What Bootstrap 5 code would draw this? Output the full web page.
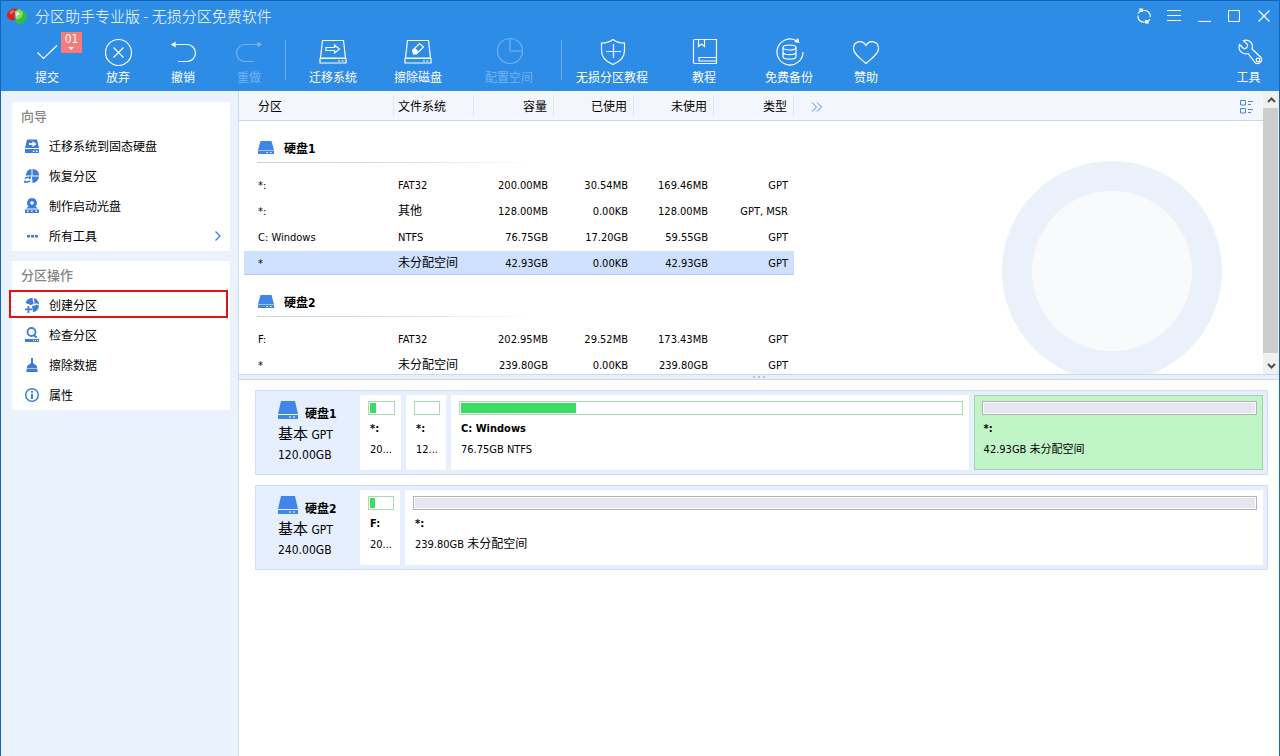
<!DOCTYPE html>
<html lang="zh-CN">
<head>
<meta charset="utf-8">
<meta name="viewport" content="width=device-width, initial-scale=1">
<title>分区助手专业版 - 无损分区免费软件</title>
<link href="https://cdn.jsdelivr.net/npm/bootstrap@5.3.0/dist/css/bootstrap.min.css" rel="stylesheet">
<style>
:root { --brand: #2d8ce6; --ink-blue: #3c7ddb; --ui: "DejaVu Sans Condensed", "Noto Sans CJK SC", sans-serif; }
body { font-family: var(--ui); font-size: 12px; line-height: 16px; color: #000; background: #fff; }
button { font-family: inherit; border: 0; background: none; padding: 0; color: inherit; }
svg { display: block; flex: none; }
.app-window { border: 1px solid #1467b8; border-bottom: 0; min-height: 100vh; }
.app-header { background: var(--brand); color: #fff; }
.title-row { height: 30px; padding-left: 6px; }
.app-title { font-family: "Noto Sans CJK SC", sans-serif; font-size: 15px; font-weight: 300; line-height: 20px; }
.win-btn { width: 30px; height: 30px; }
.tool-grid { display: grid; height: 60px; padding-left: 10px; grid-template-columns: 72px 70px 60px 72px 2px 92px 78px 104px 2px 98px 86px 84px 70px 1fr 61px; }
.tool-btn { display: flex; flex-direction: column; align-items: center; padding-top: 5px; gap: 2px; position: relative; white-space: nowrap; line-height: 20px; }
.tool-btn:disabled { color: #74b3f0; }
.tool-btn svg, .win-btn svg { fill: none; stroke: currentColor; stroke-width: 1.2; }
.tool-sep { width: 1px; height: 40px; margin-top: 9px; background: #6db1f2; }
.count-tag { position: absolute; left: 50px; top: 1px; width: 21px; height: 21px; background: #f77b7b; line-height: 15px; }
.count-tag::after { content: ""; position: absolute; left: 7px; top: 15px; border: 3px solid transparent; border-top-color: #fff; border-bottom: 0; }
.side-pane { width: 238px; flex: none; background: #eaf2fe; border-right: 1px solid #cddcf2; padding: 11px 8px 11px 11px; gap: 10px; }
.side-box { background: #fff; }
.side-box h2 { font-size: 13px; line-height: 30px; height: 29px; font-weight: 500; color: #858585; margin: 0; padding-left: 9px; }
.side-item { display: flex; align-items: center; width: 100%; height: 30px; padding: 0 8px 0 12px; gap: 9px; text-align: left; line-height: 16px; position: relative; }
.side-item span { padding-top: 2px; }
.side-item.picked::after { content: ""; position: absolute; left: -3px; right: 2px; top: 0; height: 28px; border: 2px solid #e01414; }
.side-item svg { fill: var(--ink-blue); }
.list-pane { flex: 0 0 283px; position: relative; overflow: hidden; }
.usage-ring { position: absolute; right: 57px; top: 70px; width: 220px; height: 220px; border-radius: 50%; border: 30px solid #eaf1fa; background: #f9fafb; }
.part-table { position: relative; table-layout: fixed; border-collapse: separate; border-spacing: 0; color: #000; --bs-table-bg: transparent; --bs-table-color: #000; }
.part-table thead th { height: 30px; padding: 2px 7px 0 4px; font-weight: 400; vertical-align: middle; background: #f3f6fc linear-gradient(#e2e8f2, #e2e8f2) right 50% / 1px 22px no-repeat; border-bottom: 1px solid #cdd7e4; text-align: right; }
.part-table thead th:nth-child(1), .part-table thead th:nth-child(2) { text-align: left; }
.part-table thead th:nth-child(1) { padding-left: 19px; }
.part-table thead th:last-child { background: #f3f6fc; padding-left: 17px; padding-right: 5px; }
.part-table tbody th { height: 50px; padding: 0; vertical-align: top; border: 0; }
.part-table tbody:nth-of-type(1) th { height: 52px; padding-top: 2px; }
.part-table tbody td { height: 26px; padding: 2px 6px 0 4px; font-size: 11px; line-height: 22px; vertical-align: middle; text-align: right; border-bottom: 2px solid transparent; white-space: nowrap; background-clip: padding-box; }
.part-table tbody td:nth-child(1) { padding-left: 14px; text-align: left; border-left: 5px solid transparent; }
.part-table tbody td:nth-child(2) { text-align: left; }
.part-table tr.chosen td:not(:last-child) { background-color: #cde0fd; box-shadow: inset 0 -1px #b4cae4; }
.cjk { font-size: 12px; line-height: 16px; }
.group-head { height: 39px; padding: 15px 0 0 19px; gap: 10px; font-size: 12px; line-height: 22px; }
.group-head svg { margin-top: 3px; }
.group-rule { height: 1px; width: 280px; margin-left: 18px; background: linear-gradient(90deg, #c6d0da, #d8dee6 50%, #fff); }
.bar-col { width: 16px; flex: none; background: #f0f0f0; position: relative; }
.bar-thumb { background: #cdcdcd; width: 15px; }
.bar-btn { height: 17px; }
.split-bar { height: 6px; flex: none; background: #e9f0f7; border-top: 1px solid #c9d9ea; border-bottom: 1px solid #c9d9ea; gap: 3px; }
.split-bar i { width: 2px; height: 2px; background: #b4c4e0; }
.map-pane { padding: 10px 11px 10px 16px; gap: 10px; }
.disk-row { height: 85px; background: #e6effd; border: 1px solid #d0def3; padding: 4px; gap: 5px; }
.disk-info { width: 95px; flex: none; padding: 6px 0 0 18px; line-height: 18px; }
.disk-name { font-weight: 700; font-size: 12px; gap: 7px; line-height: 18px; }
.disk-name span { padding-top: 4px; }
.disk-kind { line-height: 22px; font-size: 12px; white-space: nowrap; }
.disk-kind span { font-size: 15px; }
.part-box { background: #fff; padding: 6px; padding-left: 8px; min-width: 0; text-align: left; font-size: 11px; flex-basis: 0; display: flex; flex-direction: column; }
.part-box.slim { flex: 0 0 41px; }
.part-box.slim + .part-box.slim, .disk-row .part-box.narrow { flex-basis: 40px; }
.part-box.free { background: #c1f5c8; outline: 1px solid #a1d2a8; outline-offset: -1px; }
.part-box p { margin: 0 0 0 2px; line-height: 20px; white-space: nowrap; }
.part-box .part-name { font-weight: 700; margin-top: 4px; margin-bottom: 1px; }
.use-bar { width: 100%; height: 14px; flex: none; border: 1px solid #a9dbb0; padding: 1px; background: #fff; }
.use-bar div { height: 10px; background: #3bdd60; }
.use-bar.blank { border-color: #b3b3bd; }
.use-bar.blank div { background: #e6e6f0; }
</style>
</head>
<body>
<svg width="0" height="0" class="position-absolute" aria-hidden="true">
  <symbol id="drive" viewBox="0 0 16 13"><path d="M2.500 0h11L16 9H0zM0 9.600h16V13H0z"/><path stroke="#fff" d="M8.500 11.500H10M12 11.500h1.500"/></symbol>
  <symbol id="drive-line" viewBox="0 0 28 28"><path d="M3.500 3.500h21l2 17.500h-25zM1 21.500h26v4.500H1zM19 24h2M22.500 24h2"/></symbol>
</svg>
<div class="app-window d-flex flex-column">
  <header class="app-header">
    <div class="title-row d-flex align-items-center">
      <svg width="20" height="18" viewBox="0 0 20 18"><path fill="#d9211c" d="M0 8C1 3 5 1 10 2l2 3-5 3 1 5C4 14 0 12 0 8z"/><path fill="#2bbf4a" d="M20 9c0 5-4 8-9 8l-3-2 1-3 6-2-1-6c4 0 6 2 6 5z"/><path fill="#8fdc4c" d="M7 5l5-3 4 3-1 5-5 3-2-3 4-2z"/><path fill="#fff" fill-opacity=".75" d="M8 6l3-1 2 2-4 3z"/><path fill="#f5634e" d="M2 5l4-2 2 1-4 4z"/></svg>
      <h1 class="app-title m-0 ps-2 flex-grow-1">分区助手专业版 - 无损分区免费软件</h1>
      <button class="win-btn d-flex align-items-center justify-content-center" aria-label="刷新"><svg width="16" height="16"><path d="M5 2.500h3.500a5.500 5.500 0 0 1 5.700 6.500M11 14H8a5.500 5.500 0 0 1-6-6.500M2 5.500L4 3M14 11l-2 2.500"/><path fill="currentColor" stroke="none" d="M3 .5h4v3.500H4zM13 15.500H9V12h3z"/></svg></button>
      <button class="win-btn d-flex align-items-center justify-content-center" aria-label="菜单"><svg width="14" height="12"><path d="M0 .5h14M0 5.500h14M0 10.500h14"/></svg></button>
      <button class="win-btn d-flex align-items-center justify-content-center" aria-label="最小化"><svg width="13" height="12"><path d="M0 11.500h13"/></svg></button>
      <button class="win-btn d-flex align-items-center justify-content-center" aria-label="最大化"><svg width="12" height="12"><path d="M.5.5h11v11H.5z"/></svg></button>
      <button class="win-btn d-flex align-items-center justify-content-center" aria-label="关闭"><svg width="12" height="12"><path d="M.5.5l11 11M11.500.5l-11 11"/></svg></button>
    </div>
    <nav class="tool-grid" aria-label="工具栏">
      <button class="tool-btn"><svg width="30" height="30"><path d="M5.500 16.500l6 6L25 9.500"/></svg>提交<span class="count-tag">01</span></button>
      <button class="tool-btn"><svg width="30" height="30"><circle cx="15.500" cy="16.500" r="13"/><path d="M10.500 11.500l10 10M20.500 11.500l-10 10"/></svg>放弃</button>
      <button class="tool-btn"><svg width="30" height="30"><path d="M5 8.500h14a8.500 8.500 0 0 1 0 17H10"/><path fill="currentColor" d="M4 8.500l3-2v4z"/></svg>撤销</button>
      <button class="tool-btn" disabled><svg width="30" height="30"><path d="M25 8.500H11a8.500 8.500 0 0 0 0 17h9"/><path fill="currentColor" d="M27 8.500l-3-2v4z"/></svg>重做</button>
      <span class="tool-sep"></span>
      <button class="tool-btn"><svg width="30" height="30" viewBox="0 0 30 30"><use href="#drive-line" x="1" y="1" width="28" height="28"/><path d="M8 11.500h8.500V9l5 4-5 4v-2.500H8z"/></svg>迁移系统</button>
      <button class="tool-btn"><svg width="30" height="30" viewBox="0 0 30 30"><use href="#drive-line" x="1" y="1" width="28" height="28"/><path d="M9.500 14.500l7-7 4 3.500-7 7h-3z"/><path fill="currentColor" stroke="none" d="M10 14.500l2.500-2 3 3-2.500 2.500h-2.500z"/></svg>擦除磁盘</button>
      <button class="tool-btn" disabled><svg width="30" height="30"><circle cx="16" cy="15" r="12.500"/><path d="M16 2.500V15h12.500"/></svg>配置空间</button>
      <span class="tool-sep"></span>
      <button class="tool-btn"><svg width="30" height="30"><path d="M16 3.500c3 2.500 7 3.500 11.500 3.500v7.500c0 7-5 11.500-11.500 14-6.500-2.500-11.500-7-11.500-14V7c4.500 0 8.500-1 11.500-3.500zM9 15.500h15M16.500 8v14"/></svg>无损分区教程</button>
      <button class="tool-btn"><svg width="30" height="30"><path d="M6 3.500h21.500v24H6a1.500 1.500 0 0 1-1.500-1.500V5c0-1 .5-1.500 1.500-1.500zM9.500 4v6.500l3-2.500 3 2.500V4M27 21.500H10v3.500h17"/></svg>教程</button>
      <button class="tool-btn"><svg width="30" height="30"><path d="M22 4.500A13 13 0 1 0 29 16"/><path fill="currentColor" stroke="none" d="M20 6l4-4 1.500 5z"/><ellipse cx="15.500" cy="11.500" rx="6.500" ry="2.500"/><path d="M9 11.500v9c0 3.500 13 3.500 13 0v-9M9 16c0 3.500 13 3.500 13 0"/></svg>免费备份</button>
      <button class="tool-btn"><svg width="30" height="30"><path d="M15 27.500C9 22 2.500 18 2.500 12.500 2.500 5.500 11 3 15 9.500c4-6.500 12.500-4 12.500 3C27.500 18 21 22 15 27.500z"/></svg>赞助</button>
      <span></span>
      <button class="tool-btn"><svg width="30" height="30"><path d="M5.500 8.500l4 4c2 1 5-1.500 4-4l-4-4C15 3 20 7 18 13l9 8.500a4 4 0 0 1-5.500 5.500l-7.500-9.500C8 19 3.500 14 5.500 8.500z"/><circle cx="24" cy="24" r="1.800"/></svg>工具</button>
    </nav>
  </header>

  <div class="d-flex flex-grow-1">
    <aside class="side-pane d-flex flex-column">
      <section class="side-box">
        <h2>向导</h2>
        <button class="side-item"><svg width="16" height="16"><path d="M3 1.500h10l2 8.500H1zM1 11h14v4H1z"/><path fill="#fff" d="M5 5h3.500V3l4 3-4 3V7H5zM9 12.500h1.500V14H9zM12 12.500h1.500V14H12z"/></svg><span>迁移系统到固态硬盘</span></button>
        <button class="side-item"><svg width="16" height="16"><path d="M7.500 1v6.500H2A6 6 0 0 1 7.500 1zM8.500 1a6 6 0 0 1 6.500 6.500H8.500zM15 8.500A6.500 6.500 0 0 1 8.500 15L8 8.500z"/><path fill="none" stroke="#3c7ddb" stroke-width="1.500" d="M1 10.500a3 3 0 0 1 5 0M6 12.500a3 3 0 0 1-5 .5M6 8v3M1 15v-2.500"/></svg><span>恢复分区</span></button>
        <button class="side-item"><svg width="16" height="16"><path fill-rule="evenodd" d="M8 0a5 5 0 0 1 3.500 8.500L14 10.500H2l2.500-2A5 5 0 0 1 8 0zm0 3.200a1.800 1.800 0 1 0 0 3.600 1.800 1.800 0 0 0 0-3.600zM1 11.500h14V15H1z"/><path fill="#fff" d="M3 12.500h1.500V14H3zM7 12.500h1.500V14H7zM11.500 12.500H13V14h-1.500z"/></svg><span>制作启动光盘</span></button>
        <button class="side-item"><svg width="16" height="16"><path d="M3 7h3v2.500H3zM7 7h3v2.500H7zM11 7h3v2.500h-3z"/></svg><span>所有工具</span><svg class="ms-auto" width="8" height="12"><path fill="none" stroke="#3c7ddb" stroke-width="1.300" d="M1.500 1.500L6 6l-4.500 4.500"/></svg></button>
      </section>
      <section class="side-box">
        <h2>分区操作</h2>
        <button class="side-item picked"><svg width="16" height="16"><path d="M1.500 6C2.500 2.500 5 1 8.500 1l1 6L7 8zM10 1c3 1 5 3.500 5 6.500l-3-1.500-1.500 1.500zM8 9l3-.5 2-1 2 1.500c-.5 3.500-3 6-6 6zM3.500 9h1.800v2.500H8v1.800H5.300V16H3.500v-2.700H1v-1.800h2.500z"/></svg><span>创建分区</span></button>
        <button class="side-item"><svg width="16" height="16"><circle cx="7.500" cy="5" r="4" fill="none" stroke="#3c7ddb" stroke-width="1.800"/><path d="M10 7l3.500 3-1.500 1.300-3.500-3zM1 12h14v3H1z"/><path fill="#fff" d="M9 13h1v1H9zM11 13h1v1h-1zM13 13h1v1h-1z"/></svg><span>检查分区</span></button>
        <button class="side-item"><svg width="16" height="16"><path d="M7 1h2v5l4 3v2H3V9l4-3zM3 11.500h10l1 3.500H2z"/></svg><span>擦除数据</span></button>
        <button class="side-item"><svg width="16" height="16"><circle cx="8" cy="8" r="6.300" fill="none" stroke="#3c7ddb" stroke-width="1.500"/><path d="M7 4h2v1.800H7zM7 7h2v5H7z"/></svg><span>属性</span></button>
      </section>
    </aside>

    <main class="flex-grow-1 d-flex flex-column">
      <div class="list-pane d-flex">
        <div class="usage-ring"></div>
        <div class="flex-grow-1">
          <table class="table table-borderless part-table mb-0">
            <colgroup><col style="width:155px"><col style="width:80px"><col style="width:80px"><col style="width:80px"><col style="width:80px"><col style="width:80px"><col></colgroup>
            <thead><tr><th>分区</th><th>文件系统</th><th>容量</th><th>已使用</th><th>未使用</th><th>类型</th><th>
              <div class="d-flex justify-content-between align-items-center">
                <button aria-label="更多列"><svg width="12" height="10"><path fill="none" stroke="#4a8ae0" d="M1 .5L5.500 5 1 9.500M6 .5L10.500 5 6 9.500"/></svg></button>
                <button class="me-1" aria-label="视图"><svg width="14" height="15"><path fill="none" stroke="#4f86d0" d="M.5 1.500h5v4.500h-5zM.5 9.500h5V14h-5zM8 2.500h5M8 5.500h3M8 10.500h5M8 13.500h3"/></svg></button>
              </div></th></tr></thead>
            <tbody>
              <tr><th colspan="7"><div class="group-head d-flex align-items-start"><svg width="16" height="13" fill="#4285e8"><use href="#drive"/></svg><span>硬盘1</span></div><div class="group-rule"></div></th></tr>
              <tr><td>*:</td><td>FAT32</td><td>200.00MB</td><td>30.54MB</td><td>169.46MB</td><td>GPT</td><td></td></tr>
              <tr><td>*:</td><td><span class="cjk">其他</span></td><td>128.00MB</td><td>0.00KB</td><td>128.00MB</td><td>GPT, MSR</td><td></td></tr>
              <tr><td>C: Windows</td><td>NTFS</td><td>76.75GB</td><td>17.20GB</td><td>59.55GB</td><td>GPT</td><td></td></tr>
              <tr class="chosen"><td>*</td><td><span class="cjk">未分配空间</span></td><td>42.93GB</td><td>0.00KB</td><td>42.93GB</td><td>GPT</td><td></td></tr>
            </tbody>
            <tbody>
              <tr><th colspan="7"><div class="group-head d-flex align-items-start"><svg width="16" height="13" fill="#4285e8"><use href="#drive"/></svg><span>硬盘2</span></div><div class="group-rule"></div></th></tr>
              <tr><td>F:</td><td>FAT32</td><td>202.95MB</td><td>29.52MB</td><td>173.43MB</td><td>GPT</td><td></td></tr>
              <tr><td>*</td><td><span class="cjk">未分配空间</span></td><td>239.80GB</td><td>0.00KB</td><td>239.80GB</td><td>GPT</td><td></td></tr>
            </tbody>
          </table>
        </div>
        <div class="bar-col d-flex flex-column">
          <button class="bar-btn d-flex align-items-center justify-content-center" aria-label="向上滚动"><svg width="9" height="6"><path fill="none" stroke="#505050" stroke-width="2" d="M1 5l3.500-3.500L8 5"/></svg></button>
          <div class="bar-thumb flex-grow-1"></div>
          <button class="bar-btn d-flex align-items-center justify-content-center mt-1" aria-label="向下滚动"><svg width="9" height="6"><path fill="none" stroke="#505050" stroke-width="2" d="M1 1l3.500 3.500L8 1"/></svg></button>
        </div>
      </div>
      <div class="split-bar d-flex align-items-center justify-content-center"><i></i><i></i><i></i></div>

      <div class="map-pane d-flex flex-column">
        <section class="disk-row d-flex">
          <div class="disk-info">
            <div class="disk-name d-flex align-items-start"><svg width="20" height="18" viewBox="0 0 20 18" fill="#4285e8"><path d="M3 0h14l3 13H0zM0 14h20v4H0z"/><path fill="#fff" d="M11 15.500h2v1h-2zM15 15.500h2v1h-2z"/></svg><span class="text-nowrap">硬盘1</span></div>
            <div class="disk-kind"><span>基本</span> GPT</div>
            <div>120.00GB</div>
          </div>
          <button class="part-box slim"><div class="use-bar"><div style="width:25%"></div></div><p class="part-name">*:</p><p>20...</p></button>
          <button class="part-box slim"><div class="use-bar"></div><p class="part-name">*:</p><p>12...</p></button>
          <button class="part-box" style="flex-grow:64"><div class="use-bar"><div style="width:23%"></div></div><p class="part-name">C: Windows</p><p>76.75GB NTFS</p></button>
          <button class="part-box free" style="flex-grow:35"><div class="use-bar blank"><div></div></div><p class="part-name">*:</p><p>42.93GB 未分配空间</p></button>
        </section>
        <section class="disk-row d-flex">
          <div class="disk-info">
            <div class="disk-name d-flex align-items-start"><svg width="20" height="18" viewBox="0 0 20 18" fill="#4285e8"><path d="M3 0h14l3 13H0zM0 14h20v4H0z"/><path fill="#fff" d="M11 15.500h2v1h-2zM15 15.500h2v1h-2z"/></svg><span class="text-nowrap">硬盘2</span></div>
            <div class="disk-kind"><span>基本</span> GPT</div>
            <div>240.00GB</div>
          </div>
          <button class="part-box slim narrow"><div class="use-bar"><div style="width:22%"></div></div><p class="part-name">F:</p><p>20...</p></button>
          <button class="part-box" style="flex-grow:100"><div class="use-bar blank"><div></div></div><p class="part-name">*:</p><p>239.80GB <span class="cjk">未分配空间</span></p></button>
        </section>
      </div>
    </main>
  </div>
</div>
<script src="https://cdn.jsdelivr.net/npm/bootstrap@5.3.0/dist/js/bootstrap.bundle.min.js"></script>
</body>
</html>
